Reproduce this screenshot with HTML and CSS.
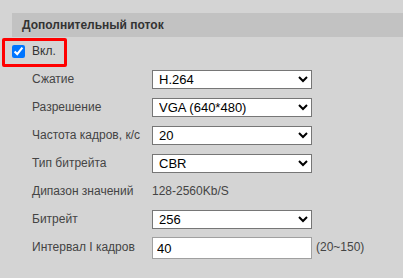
FILE: index.html
```html
<!DOCTYPE html>
<html lang="ru">
<head>
    <meta charset="UTF-8">
    <title>Дополнительный поток</title>
    <link rel="stylesheet" href="styles.css">
</head>
<body>
    <div class="section">
        <div class="section-title">Дополнительный поток</div>
        <div class="form">
            <label class="enable">
                <input type="checkbox" checked>
                <span>Вкл.</span>
            </label>

            <span class="label">Сжатие</span>
            <select class="field"><option>H.264</option></select>
            <span></span>

            <span class="label">Разрешение</span>
            <select class="field"><option>VGA (640*480)</option></select>
            <span></span>

            <span class="label">Частота кадров, к/с</span>
            <select class="field"><option>20</option></select>
            <span></span>

            <span class="label">Тип битрейта</span>
            <select class="field"><option>CBR</option></select>
            <span></span>

            <span class="label">Дипазон значений</span>
            <span class="label">128-2560Kb/S</span>
            <span></span>

            <span class="label">Битрейт</span>
            <select class="field"><option>256</option></select>
            <span></span>

            <span class="label">Интервал I кадров</span>
            <input class="field text" type="text" value="40">
            <span class="hint">(20~150)</span>
        </div>
    </div>
    <div class="highlight"></div>
</body>
</html>
```

FILE: styles.css
```css
body {
    font-family: "Liberation Sans", Arial, sans-serif;
    margin: 0;
    height: 278px;
    background-color: #d4d4d4;
    color: #444;
    position: relative;
    overflow: hidden;
}

.section {
    padding-top: 13px;
    padding-left: 12px;
}

.section-title {
    height: 24px;
    line-height: 24px;
    padding-left: 10px;
    background-color: #c2c2c2;
    font-size: 12px;
    font-weight: bold;
    color: #333;
}

.form {
    display: grid;
    grid-template-columns: 120px 160px auto;
    grid-auto-rows: 28px;
    align-items: center;
    padding-left: 20px;
    font-size: 12px;
}

.enable {
    grid-column: 1 / 4;
    display: flex;
    align-items: center;
    margin-left: -20px;
    font-size: 12px;
    color: #333;
}

.enable input {
    width: 13px;
    height: 13px;
    margin: 1px 7px 0 0;
    accent-color: #0075ff;
}

.field {
    box-sizing: border-box;
    width: 160px;
    height: 19px;
    margin: 0;
    padding: 0 0 0 2px;
    font-family: "Liberation Sans", Arial, sans-serif;
    font-size: 13px;
    color: #000;
    background-color: #fff;
    border: 1px solid #767676;
    border-radius: 0;
}

.text {
    height: 22px;
    padding-left: 4px;
    border-color: #a0a0a0;
    outline: none;
    margin-top: 2px;
}

.hint {
    padding-left: 4px;
}

.highlight {
    position: absolute;
    left: 2px;
    top: 38px;
    width: 59px;
    height: 23px;
    border: 3px solid #ff0000;
    border-radius: 2px;
}
```
